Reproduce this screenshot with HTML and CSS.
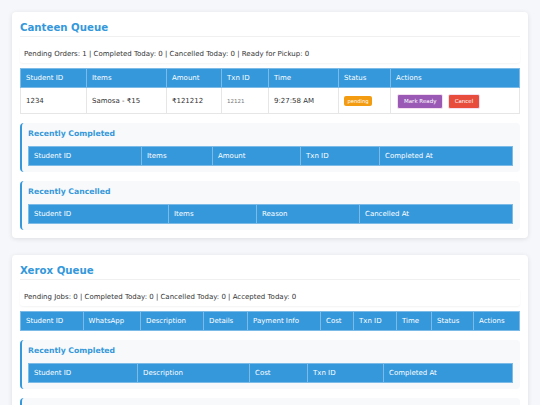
FILE: index.html
```html
<!DOCTYPE html>
<html>
<head>
    <meta charset="UTF-8">
    <title>Queue Dashboard</title>
    <link rel="stylesheet" href="styles.css">
</head>
<body>
    <div class="container">
        <div class="card">
            <h2>Canteen Queue</h2>
            <div class="stats">Pending Orders: 1 | Completed Today: 0 | Cancelled Today: 0 | Ready for Pickup: 0</div>
            <table class="canteen-orders">
                <thead>
                    <tr><th>Student ID</th><th>Items</th><th>Amount</th><th>Txn ID</th><th>Time</th><th>Status</th><th>Actions</th></tr>
                </thead>
                <tbody>
                    <tr>
                        <td>1234</td>
                        <td>Samosa - ₹15</td>
                        <td>₹121212</td>
                        <td><small>12121</small></td>
                        <td>9:27:58 AM</td>
                        <td><span class="badge">pending</span></td>
                        <td>
                            <button class="btn btn-ready">Mark Ready</button>
                            <button class="btn btn-cancel">Cancel</button>
                        </td>
                    </tr>
                </tbody>
            </table>
            <div class="recent">
                <h3>Recently Completed</h3>
                <table class="canteen-completed">
                    <thead>
                        <tr><th>Student ID</th><th>Items</th><th>Amount</th><th>Txn ID</th><th>Completed At</th></tr>
                    </thead>
                </table>
            </div>
            <div class="recent">
                <h3>Recently Cancelled</h3>
                <table class="canteen-cancelled">
                    <thead>
                        <tr><th>Student ID</th><th>Items</th><th>Reason</th><th>Cancelled At</th></tr>
                    </thead>
                </table>
            </div>
        </div>

        <div class="card">
            <h2>Xerox Queue</h2>
            <div class="stats">Pending Jobs: 0 | Completed Today: 0 | Cancelled Today: 0 | Accepted Today: 0</div>
            <table class="xerox-jobs">
                <thead>
                    <tr><th>Student ID</th><th>WhatsApp</th><th>Description</th><th>Details</th><th>Payment Info</th><th>Cost</th><th>Txn ID</th><th>Time</th><th>Status</th><th>Actions</th></tr>
                </thead>
            </table>
            <div class="recent">
                <h3>Recently Completed</h3>
                <table class="xerox-completed">
                    <thead>
                        <tr><th>Student ID</th><th>Description</th><th>Cost</th><th>Txn ID</th><th>Completed At</th></tr>
                    </thead>
                </table>
            </div>
            <div class="recent">
                <h3>Recently Cancelled</h3>
                <table>
                    <thead>
                        <tr><th>Student ID</th><th>Description</th><th>Reason</th><th>Cancelled At</th></tr>
                    </thead>
                </table>
            </div>
        </div>
    </div>
</body>
</html>
```

FILE: styles.css
```css
html, body {
    height: 405px;
    overflow: hidden;
}
body {
    font-family: "DejaVu Sans", sans-serif;
    font-size: 7px;
    background-color: #f5f7fa;
    color: #333;
    margin: 0;
}
.container {
    padding: 12px;
}
.card {
    background: white;
    padding: 8px;
    margin-bottom: 17px;
    border-radius: 4px;
    box-shadow: 0 1px 5px rgba(0,0,0,0.1);
}
h2 {
    color: #3498db;
    font-size: 10.2px;
    margin: 0 0 9px 0;
    padding-top: 1px;
    padding-bottom: 1px;
    line-height: 14px;
    border-bottom: 1px solid #f0f0f0;
}
.stats {
    padding: 4px;
    line-height: 9px;
    margin-bottom: 5px;
    border-radius: 3px;
    box-shadow: 0 1px 2px rgba(0,0,0,0.05);
}
table {
    width: 100%;
    border-collapse: collapse;
    background: white;
    table-layout: fixed;
}
th {
    box-sizing: border-box;
    background-color: #3498db;
    color: white;
    font-weight: normal;
    text-align: left;
    padding: 4.5px 5px;
    line-height: 9px;
    border: 1px solid #7cbbe8;
}
td {
    padding: 6px 5px 4px;
    border: 1px solid #e6e6e6;
    line-height: 15px;
}

/* column widths */
.canteen-orders th:nth-child(1) { width: 66px; }
.canteen-orders th:nth-child(2) { width: 80px; }
.canteen-orders th:nth-child(3) { width: 55px; }
.canteen-orders th:nth-child(4) { width: 47px; }
.canteen-orders th:nth-child(5) { width: 70px; }
.canteen-orders th:nth-child(6) { width: 52px; }
.canteen-completed th:nth-child(1) { width: 113px; }
.canteen-completed th:nth-child(2) { width: 71px; }
.canteen-completed th:nth-child(3) { width: 88px; }
.canteen-completed th:nth-child(4) { width: 79px; }
.canteen-cancelled th:nth-child(1) { width: 140px; }
.canteen-cancelled th:nth-child(2) { width: 88px; }
.canteen-cancelled th:nth-child(3) { width: 103px; }
.xerox-jobs th:nth-child(1) { width: 62.5px; }
.xerox-jobs th:nth-child(2) { width: 57.5px; }
.xerox-jobs th:nth-child(3) { width: 63px; }
.xerox-jobs th:nth-child(4) { width: 44px; }
.xerox-jobs th:nth-child(5) { width: 73px; }
.xerox-jobs th:nth-child(6) { width: 33px; }
.xerox-jobs th:nth-child(7) { width: 43px; }
.xerox-jobs th:nth-child(8) { width: 35px; }
.xerox-jobs th:nth-child(9) { width: 42px; }
.xerox-completed th:nth-child(1) { width: 109px; }
.xerox-completed th:nth-child(2) { width: 112px; }
.xerox-completed th:nth-child(3) { width: 58px; }
.xerox-completed th:nth-child(4) { width: 76px; }

small {
    font-size: 5.5px;
    color: #777;
}
.badge {
    display: inline-block;
    background-color: #f39c12;
    color: white;
    font-size: 5.2px;
    padding: 1px 3.5px;
    line-height: 8px;
    border-radius: 2px;
}
.btn {
    font-family: inherit;
    font-size: 5.5px;
    color: white;
    border: 1px solid #f3dff0;
    border-radius: 2px;
    padding: 3px 6px;
    line-height: 7px;
    margin: 0 1px;
}
.btn-ready {
    background-color: #9b59b6;
}
.btn-cancel {
    background-color: #e74c3c;
}
.recent {
    background: #f8f9fa;
    border-left: 2px solid #3498db;
    border-radius: 4px;
    margin-top: 9px;
    padding: 5px 7px 6px 6px;
}
h3 {
    color: #3498db;
    font-size: 7.7px;
    line-height: 11px;
    margin: 0 0 7px 0;
}
```
